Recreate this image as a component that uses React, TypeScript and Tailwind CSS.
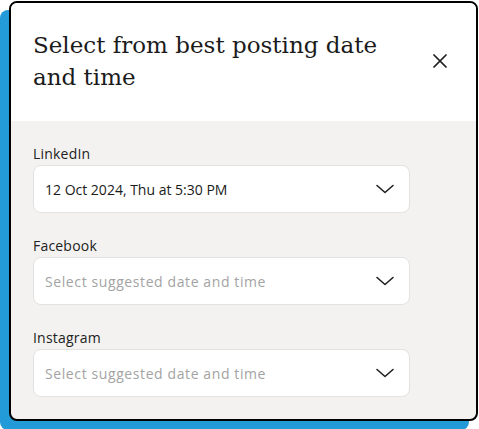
import React from 'react';

interface Field {
    label: string;
    value?: string;
}

const fields: Field[] = [
    { label: 'LinkedIn', value: '12 Oct 2024, Thu at 5:30 PM' },
    { label: 'Facebook' },
    { label: 'Instagram' },
];

const Chevron = () => (
    <svg width="20" height="20" viewBox="0 0 20 20" fill="none" stroke="#1f1f1f" strokeWidth="1.6" strokeLinecap="round" strokeLinejoin="round">
        <path d="M2 6.5l8 7 8-7" />
    </svg>
);

export default function App() {
    return (
        <div className="w-[479px] h-[429px] bg-white pt-[1px] pl-[9px]" style={{ fontFamily: '"Open Sans", Inter, sans-serif' }}>
            <div className="w-[469px] h-[420px] rounded-lg border-2 border-black overflow-hidden shadow-[-9px_9px_0_#229bd8] flex flex-col bg-[#f3f2f0]">
                <div className="bg-white h-[118px] flex items-start justify-between pl-[22px] pr-[28px] pt-[26px]">
                    <h1
                        className="leading-[32px] text-[#1b1b1b] w-[375px]"
                        style={{ fontFamily: '"DejaVu Serif", "Liberation Serif", serif', fontSize: '23px' }}
                    >
                        Select from best posting date and time
                    </h1>
                    <button className="mt-[24px] text-[#1b1b1b]">
                        <svg width="16" height="16" viewBox="0 0 16 16" fill="none" stroke="currentColor" strokeWidth="1.7" strokeLinecap="round">
                            <path d="M2 2l12 12M14 2L2 14" />
                        </svg>
                    </button>
                </div>
                <div className="flex flex-col gap-[23px] pl-[22px] pt-[23px]">
                    {fields.map((f) => (
                        <div key={f.label} className="flex flex-col gap-[1px] w-[377px]">
                            <span className="text-[14px] leading-[20px] text-[#222] tracking-[0.2px]">{f.label}</span>
                            <div className="h-[48px] rounded-lg border border-[#e3e2e0] bg-white flex items-center justify-between pl-[11px] pr-[14px]">
                                {f.value ? (
                                    <span className="text-[14px] text-[#1b1b1b]">{f.value}</span>
                                ) : (
                                    <span className="text-[14px] text-[#a3a3a3] tracking-[0.6px]">Select suggested date and time</span>
                                )}
                                <Chevron />
                            </div>
                        </div>
                    ))}
                </div>
            </div>
        </div>
    );
}
